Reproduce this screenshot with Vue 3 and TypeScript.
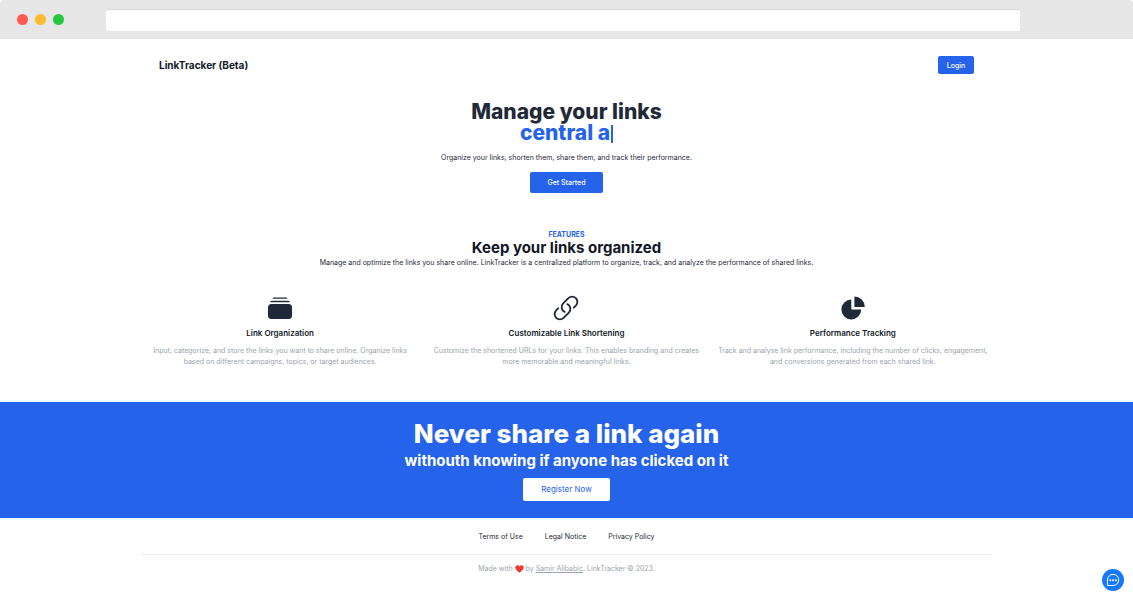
<script setup lang="ts">
interface Feature {
  icon: 'stack' | 'link' | 'pie'
  title: string
  text: string
}

const features: Feature[] = [
  {
    icon: 'stack',
    title: 'Link Organization',
    text: 'Input, categorize, and store the links you want to share online. Organize links based on different campaigns, topics, or target audiences.',
  },
  {
    icon: 'link',
    title: 'Customizable Link Shortening',
    text: 'Customize the shortened URLs for your links. This enables branding and creates more memorable and meaningful links.',
  },
  {
    icon: 'pie',
    title: 'Performance Tracking',
    text: 'Track and analyse link performance, including the number of clicks, engagement, and conversions generated from each shared link.',
  },
]

const footerLinks: string[] = ['Terms of Use', 'Legal Notice', 'Privacy Policy']
</script>

<template>
  <div class="window">
    <div class="chrome">
      <div class="lights">
        <span class="light red"></span>
        <span class="light yellow"></span>
        <span class="light green"></span>
      </div>
      <input class="address" type="text" aria-label="Address" />
    </div>

    <header class="header">
      <a class="brand" href="#">LinkTracker (Beta)</a>
      <button class="btn login" type="button">Login</button>
    </header>

    <main>
      <section class="hero">
        <h1>
          <span class="line-text">Manage your links</span>
          <span class="line-text typed">central a<span class="caret"></span></span>
        </h1>
        <p>Organize your links, shorten them, share them, and track their performance.</p>
        <button class="btn start" type="button">Get Started</button>
      </section>

      <section class="features">
        <p class="eyebrow">FEATURES</p>
        <h2>Keep your links organized</h2>
        <p class="lead">
          Manage and optimize the links you share online. LinkTracker is a centralized platform to organize, track, and
          analyze the performance of shared links.
        </p>
        <div class="grid">
          <article v-for="f in features" :key="f.title" class="feature">
            <svg v-if="f.icon === 'stack'" class="icon" viewBox="0 0 28 28" aria-hidden="true">
              <rect x="2" y="10" width="24" height="15" rx="3.5" />
              <path d="M4 8.200c.5-.9 1.300-1.400 2.400-1.400h15.200c1.100 0 1.900.5 2.400 1.400z" />
              <path d="M6.500 4.800c.3-.9.900-1.400 1.900-1.400h11.200c1 0 1.600.5 1.900 1.400z" />
            </svg>
            <svg v-else-if="f.icon === 'link'" class="icon line" viewBox="0 0 24 24" aria-hidden="true">
              <path d="M13.190 8.688a4.500 4.500 0 0 1 1.242 7.244l-4.500 4.500a4.500 4.500 0 0 1-6.364-6.364l1.757-1.757m13.350-.622 1.757-1.757a4.500 4.500 0 0 0-6.364-6.364l-4.500 4.500a4.500 4.500 0 0 0 1.242 7.244" />
            </svg>
            <svg v-else class="icon" viewBox="0 0 28 28" aria-hidden="true">
              <path d="M12.300 5.600v10h9.900a9.900 9.900 0 1 1-9.900-10z" />
              <path d="M15.400 2.500a10.500 10.500 0 0 1 10.400 10.400h-10.400z" />
            </svg>
            <h3>{{ f.title }}</h3>
            <p>{{ f.text }}</p>
          </article>
        </div>
      </section>

      <section class="cta">
        <h2>Never share a link again</h2>
        <h3>withouth knowing if anyone has clicked on it</h3>
        <button class="btn register" type="button">Register Now</button>
      </section>
    </main>

    <footer class="footer">
      <nav>
        <a v-for="l in footerLinks" :key="l" href="#">{{ l }}</a>
      </nav>
      <p>
        Made with
        <svg class="heart" viewBox="0 0 18 16" role="img" aria-label="love">
          <path d="M9 15.500C5 12.500.5 9.300.5 5.100.5 2.500 2.400.6 4.800.6 6.600.6 8.200 1.500 9 3.200 9.800 1.500 11.400.6 13.200.6c2.400 0 4.300 1.900 4.300 4.500 0 4.200-4.500 7.400-8.500 10.400z" />
        </svg>
        by <a href="#">Samir Alibabic</a>. LinkTracker © 2023.
      </p>
    </footer>

    <button class="chat" type="button" aria-label="Open chat">
      <svg viewBox="0 0 22 22" aria-hidden="true">
        <path d="M5.500 16.500v-5.500a5.600 5.600 0 1 1 5.600 5.500z" />
        <circle cx="8.300" cy="11.200" r="1" />
        <circle cx="11.100" cy="11.200" r="1" />
        <circle cx="13.900" cy="11.200" r="1" />
      </svg>
    </button>
  </div>
</template>

<style>
body {
  margin: 0;
  background: #fff;
}
</style>

<style scoped>
.window {
  min-height: 100vh;
  overflow: hidden;
  border-radius: 4px;
  background: #fff;
  color: #1f2937;
  font-family: Inter, 'Liberation Sans', sans-serif;
  font-size: 7px;
  line-height: 11px;
}

h1,
h2,
h3,
p {
  margin: 0;
}

a {
  color: inherit;
  text-decoration: none;
}

.chrome {
  display: grid;
  grid-template-columns: 90px 1fr 97px;
  column-gap: 16px;
  align-items: center;
  height: 39px;
  background: #e7e7e7;
}

.lights {
  display: flex;
  gap: 7px;
  padding-left: 17px;
}

.light {
  width: 11px;
  height: 11px;
  border-radius: 50%;
}

.red {
  background: #ff5a52;
}

.yellow {
  background: #fdbc2e;
}

.green {
  background: #27c83f;
}

.address {
  box-sizing: border-box;
  width: 100%;
  height: 22px;
  padding: 0 8px;
  border: 0;
  border-top: 1px solid #d8d8d8;
  border-radius: 2px;
  background: #fff;
  font: inherit;
}

.header {
  box-sizing: border-box;
  display: flex;
  align-items: center;
  justify-content: space-between;
  width: 100%;
  max-width: 851px;
  margin: 0 auto;
  padding: 17px 18px 0;
}

.brand {
  color: #111827;
  font-size: 10px;
  font-weight: 700;
}

.btn {
  padding: 0;
  border: 0;
  border-radius: 2px;
  background: #2563eb;
  color: #fff;
  font: inherit;
  font-weight: 500;
}

.login {
  width: 36px;
  height: 18px;
}

.hero {
  display: flex;
  flex-direction: column;
  align-items: center;
  padding-top: 27px;
  text-align: center;
}

h1 {
  margin-bottom: 9px;
  font-size: 21px;
  font-weight: 800;
  line-height: 21px;
}

.line-text {
  display: block;
}

.typed {
  color: #2563eb;
}

.caret {
  display: inline-block;
  width: 2px;
  height: 18px;
  margin-left: 1px;
  background: #2563eb;
  vertical-align: -3px;
}

.start {
  width: 73px;
  height: 21px;
  margin-top: 9px;
}

.features {
  max-width: 851px;
  margin: 0 auto;
  padding-top: 36px;
  text-align: center;
}

.eyebrow {
  color: #2563eb;
  font-weight: 700;
}

.features h2 {
  color: #111827;
  font-size: 15px;
  font-weight: 700;
  line-height: 16px;
}

.lead {
  line-height: 14px;
}

.grid {
  display: grid;
  grid-template-columns: repeat(3, 1fr);
  gap: 8px;
  margin-top: 24px;
}

.feature {
  display: flex;
  flex-direction: column;
  align-items: center;
  padding: 0 2px;
}

.icon {
  width: 28px;
  height: 28px;
  fill: #1f2937;
}

.line {
  fill: none;
  stroke: #1f2937;
  stroke-width: 1.6;
  stroke-linecap: round;
  stroke-linejoin: round;
}

.feature h3 {
  margin: 6px 0;
  color: #111827;
  font-size: 8px;
  font-weight: 600;
}

.feature p {
  color: #9ca3af;
}

.cta {
  display: flex;
  flex-direction: column;
  align-items: center;
  margin-top: 35px;
  padding: 16px 0 17px;
  background: #2563eb;
  color: #fff;
  text-align: center;
}

.cta h2 {
  font-size: 26px;
  font-weight: 800;
  line-height: 32px;
}

.cta h3 {
  font-size: 15px;
  font-weight: 700;
  line-height: 22px;
}

.register {
  width: 87px;
  height: 23px;
  margin-top: 6px;
  background: #fff;
  color: #2563eb;
  font-size: 8px;
  font-weight: 400;
}

.footer {
  max-width: 851px;
  margin: 0 auto;
  text-align: center;
}

.footer nav {
  display: flex;
  justify-content: center;
  gap: 22px;
  padding: 13px 0 12px;
  border-bottom: 1px solid #eceef1;
}

.footer p {
  padding-top: 8px;
  color: #9ca3af;
}

.footer p a {
  text-decoration: underline;
}

.heart {
  width: 9px;
  height: 8px;
  fill: #ef3b2f;
  vertical-align: -2px;
}

.chat {
  position: fixed;
  right: 9px;
  bottom: 9px;
  width: 22px;
  height: 22px;
  padding: 0;
  border: 0;
  border-radius: 50%;
  background: #1677ff;
}

.chat svg {
  display: block;
  width: 22px;
  height: 22px;
  fill: none;
  stroke: #fff;
  stroke-linejoin: round;
}

.chat circle {
  fill: #fff;
  stroke: none;
}
</style>
